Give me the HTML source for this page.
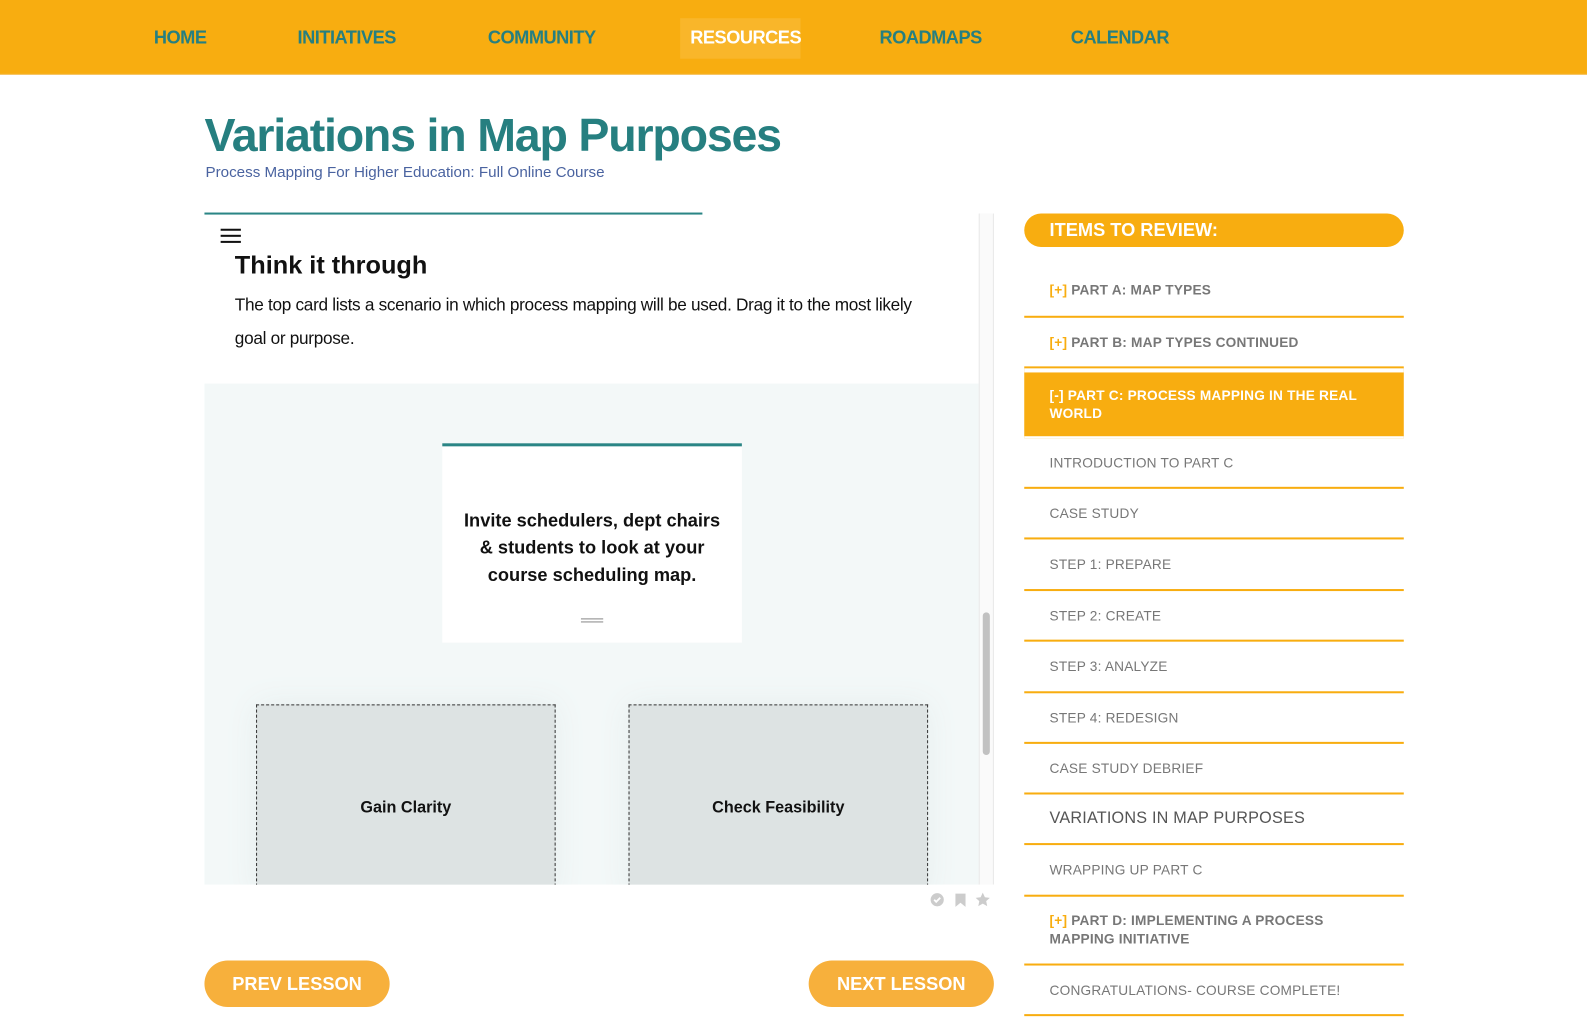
<!DOCTYPE html>
<html><head><meta charset="utf-8"><style>
*{margin:0;padding:0;box-sizing:border-box}
html,body{width:1587px;height:1017px;overflow:hidden;background:#fff}
body{font-family:"Liberation Sans",sans-serif}
#w{position:absolute;left:0;top:0;width:1568px;height:1005px;transform:scale(1.0121);transform-origin:0 0}
.nav{position:absolute;left:0;top:0;width:1568px;height:74px;background:#f8ad10;border-bottom:1px solid #f5c66a}
.nav a{position:absolute;top:27px;font-weight:bold;font-size:18px;color:#267f80;letter-spacing:-0.5px;text-decoration:none}
.res{position:absolute;left:672px;top:18px;width:119px;height:40px;background:#f9b62a}
h1{position:absolute;left:202px;top:106px;font-size:46px;font-weight:bold;color:#267f80;letter-spacing:-1.2px}
.sub{position:absolute;left:203px;top:162px;font-size:15px;color:#4a63a0}
.tline{position:absolute;left:202px;top:210px;width:492px;height:2px;background:#2a8585}
.ham{position:absolute;left:218px;top:226px;width:20px}
.ham i{display:block;height:2px;background:#111;margin-bottom:4px}
h2{position:absolute;left:232px;top:248px;font-size:25px;color:#111}
.p{position:absolute;left:232px;top:285px;width:700px;font-size:17px;line-height:33px;color:#111;letter-spacing:-0.3px}
.sb{position:absolute;left:967px;top:211px;width:15px;height:663px;background:#fafafa;border-left:1px solid #e8e8e8;border-right:1px solid #e8e8e8}
.thumb{position:absolute;left:971px;top:605px;width:7px;height:141px;background:#c1c1c1;border-radius:4px}
.area{position:absolute;left:202px;top:379px;width:765px;height:495px;background:#f3f8f8;overflow:hidden}
.card{position:absolute;left:235px;top:59px;width:296px;height:197px;background:#fff;border-top:3px solid #2a8585;text-align:center;font-weight:bold;font-size:18px;line-height:27px;padding-top:60px;color:#111}
.drop{position:absolute;top:317px;width:296px;height:190px;background:#dde3e3;border:1px dashed #333;text-align:center;font-weight:bold;font-size:16px;padding-top:93px;color:#111;box-shadow:0 0 30px #e6eeee}
.btn{position:absolute;top:949px;height:46px;border-radius:23px;background:#f7b03c;color:#fff;font-weight:bold;font-size:18px;text-align:center;line-height:46px}
.side{position:absolute;left:1012px;top:211px;width:375px}
.hd{height:33px;border-radius:17px;background:#f8ad10;color:#fff;font-size:18px;font-weight:bold;padding-left:25px;line-height:33px}
.it{border-bottom:2px solid #f8ad10;padding:0 25px;font-size:13.5px;color:#777;display:flex;align-items:center;letter-spacing:0.2px}
.b{font-weight:bold}
.o{color:#f8ad10}
</style></head><body><div id="w">
<div class="nav">
<div class="res"></div>
<a style="left:152px">HOME</a><a style="left:294px">INITIATIVES</a><a style="left:482px">COMMUNITY</a><a style="left:682px;color:#fff">RESOURCES</a><a style="left:869px">ROADMAPS</a><a style="left:1058px">CALENDAR</a>
</div>
<h1>Variations in Map Purposes</h1>
<div class="sub">Process Mapping For Higher Education: Full Online Course</div>
<div class="tline"></div>
<div class="ham"><i></i><i></i><i></i></div>
<h2>Think it through</h2>
<div class="p">The top card lists a scenario in which process mapping will be used. Drag it to the most likely goal or purpose.</div>
<div class="area">
<div class="card">Invite schedulers, dept chairs<br>&amp; students to look at your<br>course scheduling map.
<div style="position:absolute;left:137px;top:170px;width:22px;border-top:1px solid #888;border-bottom:1px solid #888;height:4px"></div></div>
<div class="drop" style="left:51px">Gain Clarity</div>
<div class="drop" style="left:419px">Check Feasibility</div>
</div>
<div class="sb"></div><div class="thumb"></div>
<svg style="position:absolute;left:919px;top:881px" width="64" height="16" viewBox="0 0 64 16">
<circle cx="7" cy="8" r="6.5" fill="#ccc"/><path d="M4 8l2 2 4-4" stroke="#fff" stroke-width="1.8" fill="none"/>
<path d="M25 2h10v13l-5-4-5 4z" fill="#ccc"/>
<path d="M52 1l2.1 4.5 4.9.6-3.6 3.3 1 4.9-4.4-2.5-4.4 2.5 1-4.9-3.6-3.3 4.9-.6z" fill="#ccc"/>
</svg>
<div class="btn" style="left:202px;width:183px">PREV LESSON</div>
<div class="btn" style="left:799px;width:183px">NEXT LESSON</div>
<div class="side">
<div class="hd">ITEMS TO REVIEW:</div>
<div class="it b" style="height:70px;padding-top:17px"><span class="o">[+]</span>&nbsp;PART A: MAP TYPES</div>
<div class="it b" style="height:50px"><span class="o">[+]</span>&nbsp;PART B: MAP TYPES CONTINUED</div>
<div class="it b" style="height:69px;background:#f8ad10;color:#fff;border-top:4px solid #fff;border-bottom:2px solid #fff;line-height:18px">[-] PART C: PROCESS MAPPING IN THE REAL WORLD</div>
<div class="it" style="height:50px">INTRODUCTION TO PART C</div>
<div class="it" style="height:50px">CASE STUDY</div>
<div class="it" style="height:51px">STEP 1: PREPARE</div>
<div class="it" style="height:50px">STEP 2: CREATE</div>
<div class="it" style="height:51px">STEP 3: ANALYZE</div>
<div class="it" style="height:50px">STEP 4: REDESIGN</div>
<div class="it" style="height:50px">CASE STUDY DEBRIEF</div>
<div class="it" style="height:50px;font-size:16px;color:#555">VARIATIONS IN MAP PURPOSES</div>
<div class="it" style="height:51px">WRAPPING UP PART C</div>
<div class="it b" style="height:68px;line-height:18px"><span><span class="o">[+]</span> PART D: IMPLEMENTING A PROCESS MAPPING INITIATIVE</span></div>
<div class="it" style="height:50px">CONGRATULATIONS- COURSE COMPLETE!</div>
</div>
</div></body></html>
